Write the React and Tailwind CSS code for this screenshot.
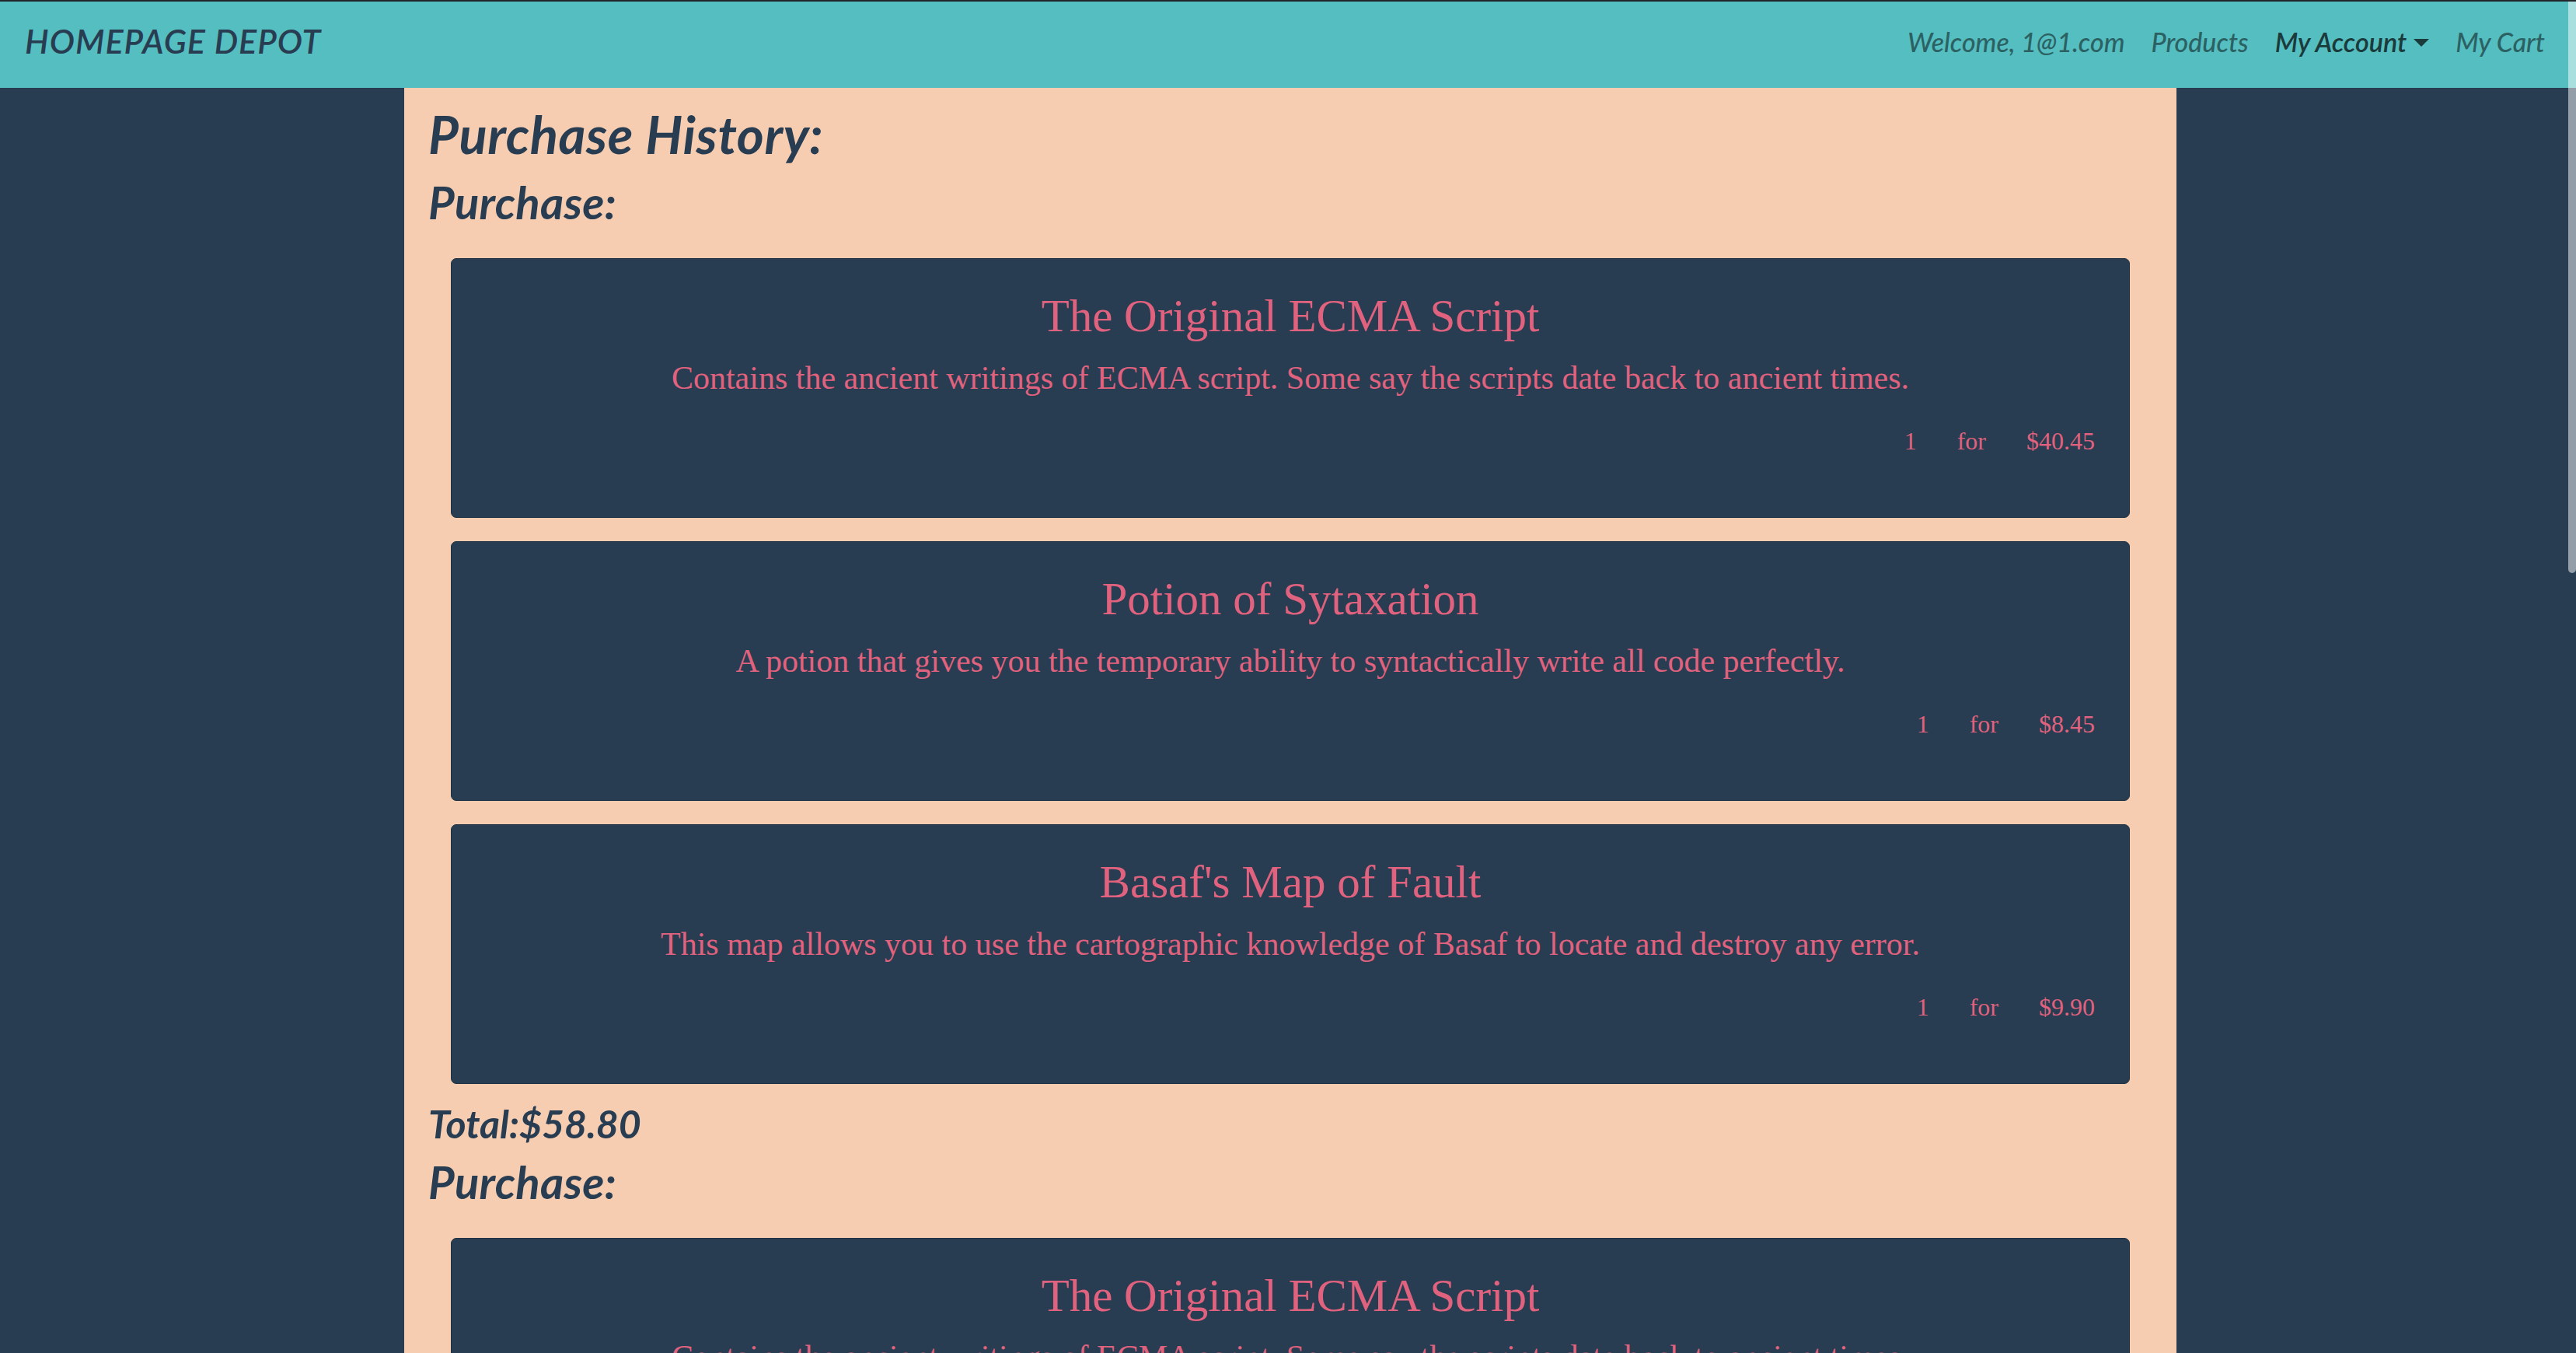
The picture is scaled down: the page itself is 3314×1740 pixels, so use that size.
import React from "react";

const ECMA = {
  name: "The Original ECMA Script",
  desc: "Contains the ancient writings of ECMA script. Some say the scripts date back to ancient times.",
  qty: 1,
  price: "$40.45",
};

const PURCHASES = [
  {
    items: [
      ECMA,
      {
        name: "Potion of Sytaxation",
        desc: "A potion that gives you the temporary ability to syntactically write all code perfectly.",
        qty: 1,
        price: "$8.45",
      },
      {
        name: "Basaf's Map of Fault",
        desc: "This map allows you to use the cartographic knowledge of Basaf to locate and destroy any error.",
        qty: 1,
        price: "$9.90",
      },
    ],
    total: "$58.80",
  },
  {
    items: [ECMA],
    total: "$40.45",
  },
];

const sans = "font-['Lato','Open_Sans',sans-serif] italic";
const slab = "font-['Liberation_Serif','DejaVu_Serif',serif]";

function Navbar() {
  return (
    <nav className={`flex justify-between h-[113px] border-t-2 border-[#212529] bg-[#55bec0] pl-[32px] pr-[40px] ${sans}`}>
      <a className="mt-[29px] text-[43px] leading-none font-semibold text-[#283d51] tracking-[1px]">
        HOMEPAGE DEPOT
      </a>
      <ul className="flex gap-[34px] mt-[35px] text-[34px] leading-none font-medium text-[#2c6163]">
        <li>Welcome, 1@1.com</li>
        <li>Products</li>
        <li className="flex items-start font-semibold text-[#1b3a3b]">
          My Account
          <span className="ml-[9px] mt-[13px] w-0 h-0 border-l-[10px] border-r-[10px] border-t-[10px] border-l-transparent border-r-transparent border-t-[#1b3a3b]" />
        </li>
        <li>My Cart</li>
      </ul>
    </nav>
  );
}

function ItemCard({ item }) {
  return (
    <div className={`flex flex-col h-[334px] rounded-[7px] border border-[#1f3142] bg-[#283d51] text-[#e0627e] pt-[38px] px-[44px] ${slab}`}>
      <h4 className="text-center text-[59px] leading-[1.2]">{item.name}</h4>
      <p className="mt-[13px] text-center text-[42px] leading-[1.5]">{item.desc}</p>
      <div className="mt-[25px] flex justify-end gap-[52px] text-[32px] leading-[1.5]">
        <span>{item.qty}</span>
        <span>for</span>
        <span>{item.price}</span>
      </div>
    </div>
  );
}

function Purchase({ purchase, first }) {
  return (
    <section>
      <h3 className={`${first ? "mt-[13px]" : "mt-[10px]"} text-[58px] leading-[1.2] font-bold text-[#283d51] tracking-[0.3px] ${sans}`}>
        Purchase:
      </h3>
      <div className="mt-[37px] mx-[29px] flex flex-col gap-[30px]">
        {purchase.items.map((item, i) => (
          <ItemCard key={i} item={item} />
        ))}
      </div>
      <h4 className={`mt-[21px] text-[50px] leading-[1.2] font-bold text-[#283d51] ${sans}`}>
        Total:{purchase.total}
      </h4>
    </section>
  );
}

export default function App() {
  return (
    <div className="relative h-screen overflow-hidden bg-[#283d51]">
      <Navbar />
      <div className="flex justify-center h-full pl-[6px]">
        <main className="w-[2280px] bg-[#f6cdb1] pt-[19px] px-[31px]">
          <h2 className={`text-[67px] leading-[1.2] font-bold text-[#283d51] tracking-[0.6px] ${sans}`}>
            Purchase History:
          </h2>
          {PURCHASES.map((p, i) => (
            <Purchase key={i} purchase={p} first={i === 0} />
          ))}
        </main>
      </div>
      {/* scrollbar thumb */}
      <div className="absolute right-0 top-[2px] w-[10px] h-[735px] rounded-b-[5px] bg-white/50" />
    </div>
  );
}
